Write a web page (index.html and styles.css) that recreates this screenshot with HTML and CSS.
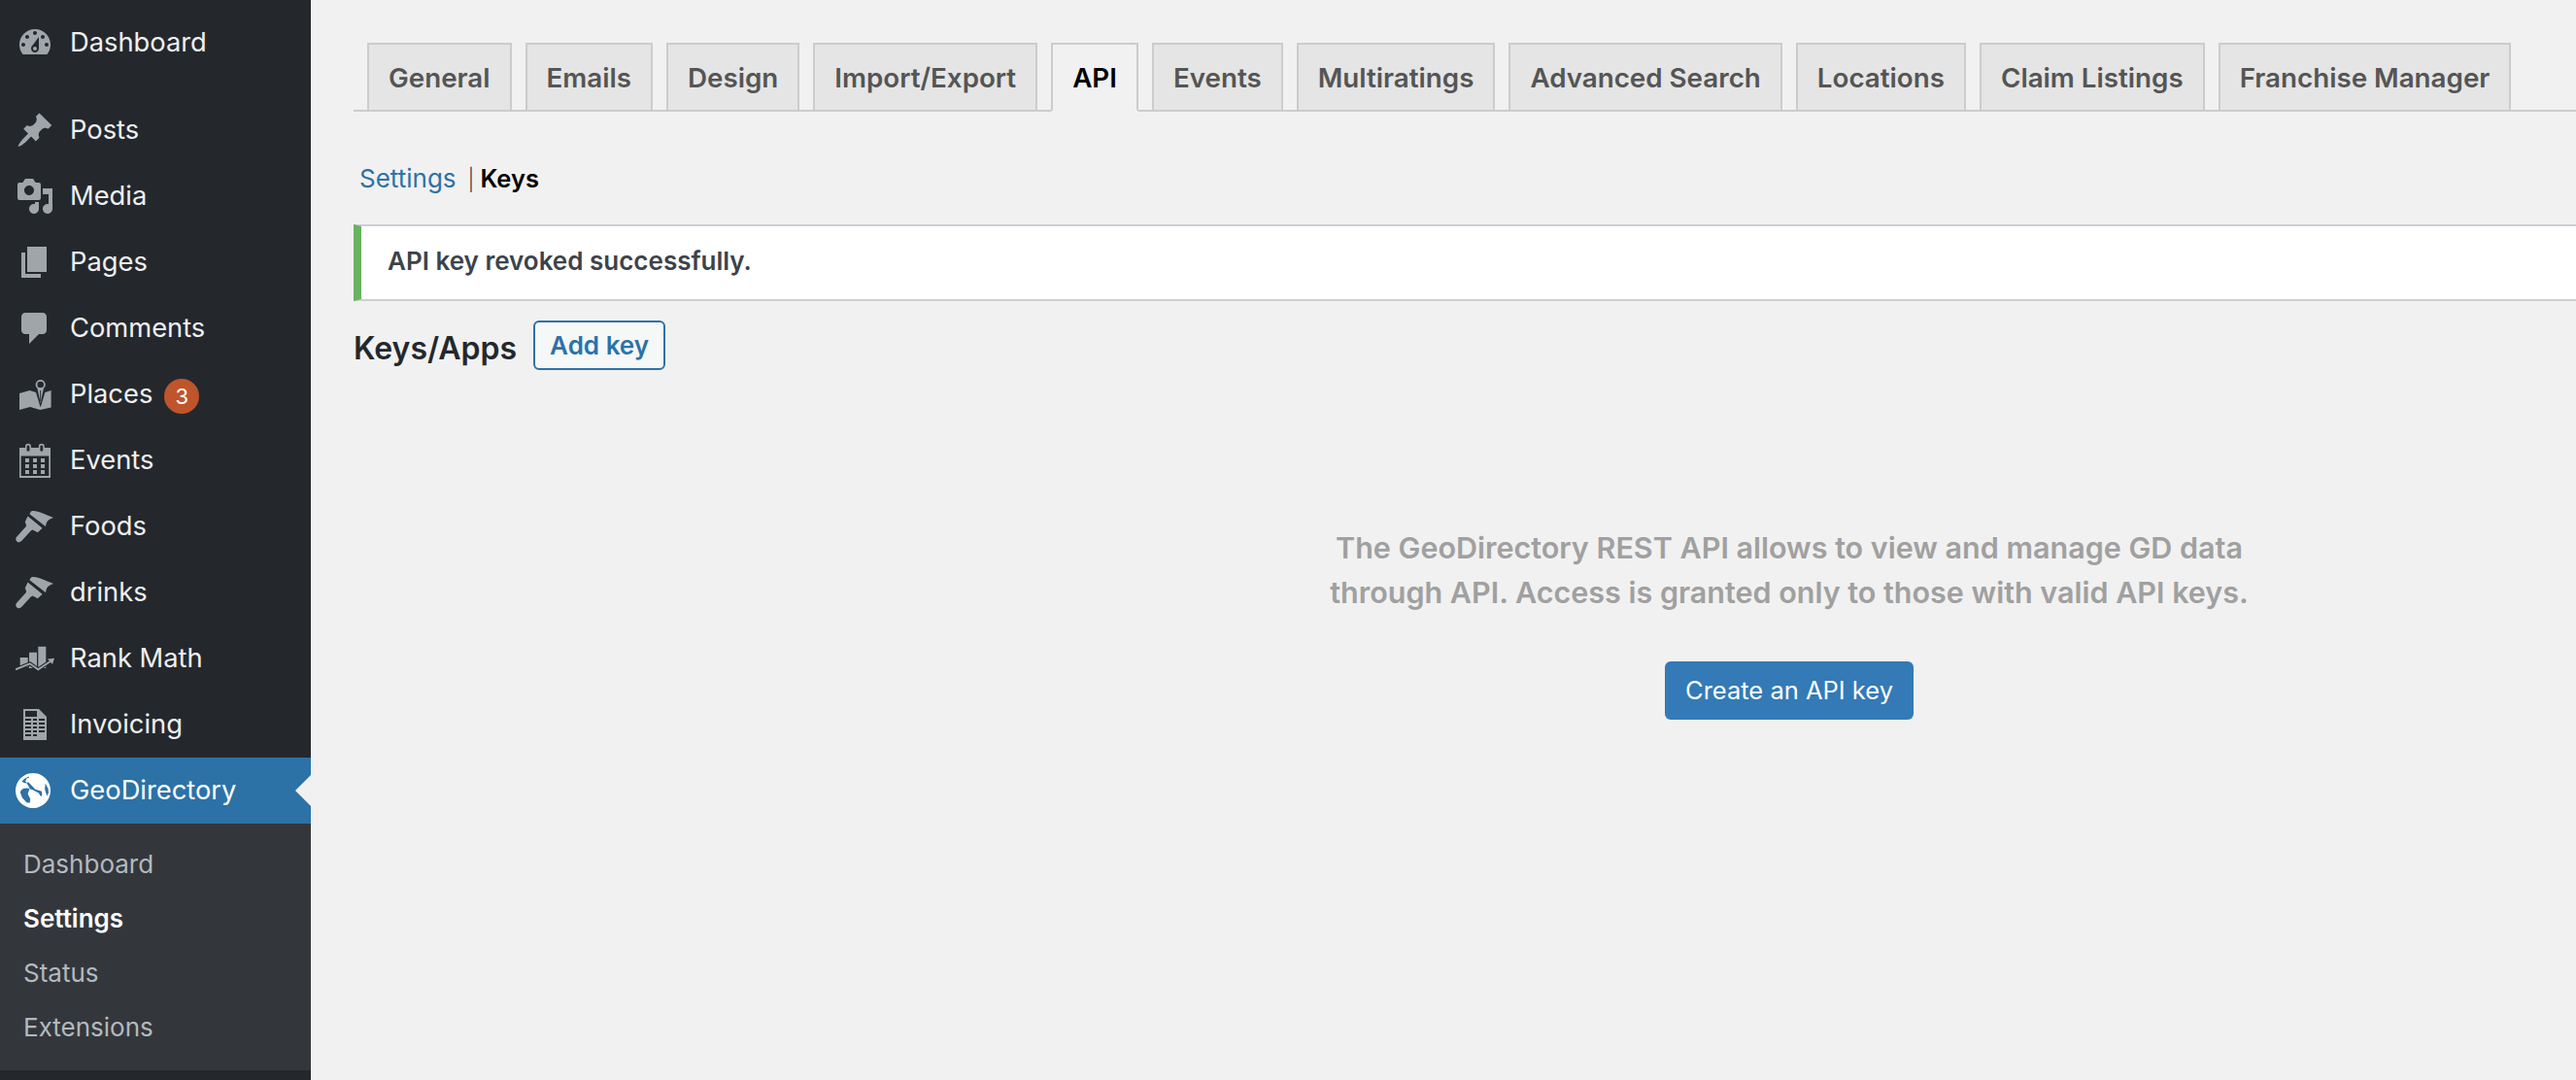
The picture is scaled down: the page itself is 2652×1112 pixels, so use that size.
FILE: index.html
```html
<!DOCTYPE html>
<html lang="en">
<head>
    <meta charset="UTF-8">
    <title>API Keys</title>
    <link rel="stylesheet" href="styles.css">
</head>
<body>
    <div class="sidebar">
        <ul class="menu first">
            <li><svg viewBox="0 0 20 20"><path fill-rule="evenodd" d="M3.76 16h12.48c1.1-1.37 1.76-3.11 1.76-5 0-4.42-3.58-8-8-8s-8 3.58-8 8c0 1.89.66 3.63 1.76 5zM10 4c.55 0 1 .45 1 1s-.45 1-1 1-1-.45-1-1 .45-1 1-1zM6 6c.55 0 1 .45 1 1s-.45 1-1 1-1-.45-1-1 .45-1 1-1zm8 0c.55 0 1 .45 1 1s-.45 1-1 1-1-.45-1-1 .45-1 1-1zm-5.37 5.55L12 7v6c0 1.1-.9 2-2 2s-2-.9-2-2c0-.57.24-1.08.63-1.45zM4 10c.55 0 1 .45 1 1s-.45 1-1 1-1-.45-1-1 .45-1 1-1zm12 0c.55 0 1 .45 1 1s-.45 1-1 1-1-.45-1-1 .45-1 1-1zm-5 3c0-.55-.45-1-1-1s-1 .45-1 1 .45 1 1 1 1-.45 1-1z"/></svg>Dashboard</li>
        </ul>
        <ul class="menu">
            <li><svg viewBox="0 0 20 20"><path d="M10.44 3.02l1.82-1.82 6.36 6.35-1.83 1.82c-1.05-.68-2.48-.57-3.41.36l-.75.75c-.92.93-1.04 2.35-.35 3.41l-1.83 1.82-2.41-2.41-2.8 2.79c-.42.42-3.38 2.71-3.8 2.29s1.86-3.39 2.28-3.81l2.79-2.79L4.1 9.36l1.83-1.82c1.05.69 2.48.57 3.4-.36l.75-.75c.93-.92 1.05-2.35.36-3.41z"/></svg>Posts</li>
            <li><svg viewBox="0 0 20 20"><path fill-rule="evenodd" d="M13 11V4c0-.55-.45-1-1-1h-1.67L9 1H5L3.67 3H2c-.55 0-1 .45-1 1v7c0 .55.45 1 1 1h10c.55 0 1-.45 1-1zM7 4.5c1.38 0 2.5 1.12 2.5 2.5S8.38 9.5 7 9.5 4.5 8.38 4.5 7 5.62 4.5 7 4.5zM14 6h5v10.5c0 1.38-1.12 2.5-2.5 2.5S14 17.88 14 16.5s1.12-2.5 2.5-2.5c.17 0 .34.02.5.05V9h-3V6zm-4 8.05V13h2v3.5c0 1.38-1.12 2.5-2.5 2.5S7 17.88 7 16.5 8.12 14 9.5 14c.17 0 .34.02.5.05z"/></svg>Media</li>
            <li><svg viewBox="0 0 20 20"><path d="M6 15V2h10v13H6zm-1 1h8v2H3V5h2v11z"/></svg>Pages</li>
            <li><svg viewBox="0 0 20 20"><path d="M5 2h9c1.1 0 2 .9 2 2v7c0 1.1-.9 2-2 2h-2l-5 5v-5H5c-1.1 0-2-.9-2-2V4c0-1.1.9-2 2-2z"/></svg>Comments</li>
            <li><svg viewBox="0 0 20 20"><path d="M2 9.500 7.300 8l3.200 1h4.700L18.300 8v8.800l-5.600 1.200-5.200-1.500L2 18z"/><path class="cut" d="M9.900 7h5.900l-2.950 9.800z"/><circle class="ring" cx="12.850" cy="5" r="2.100"/><path d="M11.200 6.800h3.300l-1.650 7.800z"/><path class="cut" d="M12.600 8h.5v5.500h-.5z"/></svg>Places<span class="count">3</span></li>
            <li><svg viewBox="0 0 20 20"><path fill-rule="evenodd" d="M2 3.500h3V2.900a1.500 1.500 0 0 1 3 0v.6h3.900V2.900a1.500 1.500 0 0 1 3 0v.6H18V19H2zM5.800 2.900v2.300h1.400V2.900a.7.7 0 0 0-1.400 0zM12.700 2.900v2.300h1.400V2.900a.7.7 0 0 0-1.400 0zM2.850 7.700V18h14.300V7.700zM5 9h2v2H5zM9 9h2v2H9zM13 9h2v2h-2zM5 12h2v2H5zM9 12h2v2H9zM13 12h2v2h-2zM5 15h2v2H5zM9 15h2v2H9zM13 15h2v2h-2z"/></svg>Events</li>
            <li><svg viewBox="0 0 20 20"><path d="M8 2.200c3-.8 7 1.800 11.500 3.300-1.800.5-3.200 1.500-3.600 2.700-.2.700-.2 1.200-.5 1.800L7.200 3.600zM6.300 4.800l7.500 6.100-2.400 2.200-2.600-1.400-.9.5-4.700 5.200c-.7.8-1.700 1-2.500.3-.7-.7-.8-1.500-.1-2.300l4.500-5c.3-.4.5-.6.4-1.200l-.6-1.500z"/></svg>Foods</li>
            <li><svg viewBox="0 0 20 20"><path d="M8 2.200c3-.8 7 1.800 11.500 3.300-1.800.5-3.200 1.500-3.600 2.700-.2.700-.2 1.200-.5 1.800L7.200 3.600zM6.300 4.800l7.500 6.100-2.400 2.200-2.600-1.400-.9.5-4.700 5.200c-.7.8-1.700 1-2.500.3-.7-.7-.8-1.500-.1-2.300l4.500-5c.3-.4.5-.6.4-1.200l-.6-1.500z"/></svg>drinks</li>
            <li><svg viewBox="0 0 20 20"><path d="M2.350 9.500h4v5h-4zM7 6.850h4V15H7zM11.650 3.850h4V15h-4z"/><path class="halo" d="M0 15.650l7.350-3 4.300 3 7-4.650"/><path class="line" d="M0 15.650l7.350-3 4.300 3 7-4.650"/><path d="M16.500 10.300l3.500-.45-1 3.150z"/></svg>Rank Math</li>
            <li><svg viewBox="0 0 20 20"><path fill-rule="evenodd" d="M4 2h8l4 4v12H4zM5 3v3h6V3zM5 7v1h3V7zM9 7v1h2V7zM12 7v1h3V7zM5 9v1h3V9zM9 9v1h2V9zM12 9v1h3V9zM5 11v1h3v-1zM9 11v1h2v-1zM12 11v1h3v-1zM5 13v1h3v-1zM9 13v1h2v-1zM12 13v1h3v-1zM5 15v1h3v-1zM9 15v1h2v-1z"/></svg>Invoicing</li>
            <li class="current"><svg viewBox="0 0 20 20"><path fill-rule="evenodd" d="M9 1a9 9 0 1 0 .01 0zM6.800 2.800C5.400 3.300 4.200 4.200 3.200 5.400l1.800.8 1.400-.6.8.6 3 3.200 3.300 1 .2 1.800-.6.9-1.200-1.900-3.100-1.600-2.800-.9-1.800.2-1.300.8-.5 1.200 1 2.700 2.400 2.700 1.600-.1.200-2-1.300-2.400 1-3.100-2.200-3.600.6-1.400 1.400-.5zM15.300 6.300l1.500 2.700.2 2.300-.9 1.500-1-3.400z"/></svg>GeoDirectory</li>
        </ul>
        <ul class="submenu">
            <li>Dashboard</li>
            <li class="current">Settings</li>
            <li>Status</li>
            <li>Extensions</li>
        </ul>
    </div>

    <div class="main">
        <div class="tabs">
            <a class="tab">General</a>
            <a class="tab">Emails</a>
            <a class="tab">Design</a>
            <a class="tab">Import/Export</a>
            <a class="tab active">API</a>
            <a class="tab">Events</a>
            <a class="tab">Multiratings</a>
            <a class="tab">Advanced Search</a>
            <a class="tab">Locations</a>
            <a class="tab">Claim Listings</a>
            <a class="tab">Franchise Manager</a>
        </div>
        <div class="subnav"><a>Settings</a><span class="sep">|</span><strong>Keys</strong></div>
        <div class="notice">API key revoked successfully.</div>
        <div class="title-row">
            <h2>Keys/Apps</h2>
            <a class="add-btn">Add key</a>
        </div>
        <div class="blank">
            <p>The GeoDirectory REST API allows to view and manage GD data through API. Access is granted only to those with valid API keys.</p>
            <a class="create-btn">Create an API key</a>
        </div>
    </div>
</body>
</html>
```

FILE: styles.css
```css
html, body {
    height: 100%;
}
body {
    margin: 0;
    display: flex;
    overflow: hidden;
    background: #f1f1f1;
    font-family: Inter, "Liberation Sans", sans-serif;
    font-size: 26px;
    color: #3c434a;
}
.sidebar {
    width: 320px;
    flex: none;
    background: #24282d;
    padding-top: 10px;
    box-sizing: border-box;
}
.menu, .submenu {
    list-style: none;
    margin: 0;
    padding: 0;
}
.menu.first {
    margin-bottom: 22px;
}
.menu li {
    position: relative;
    display: flex;
    align-items: center;
    height: 66px;
    padding: 0 0 2px 16px;
    font-size: 27.3px;
    color: #f0f0f1;
}
.menu svg {
    width: 40px;
    height: 40px;
    margin: 2px 16px 0 0;
    flex: none;
    fill: #a0a5aa;
}
.menu svg .cut {
    fill: #24282d;
}
.menu svg .ring {
    fill: none;
    stroke: #a0a5aa;
    stroke-width: 0.9;
}
.menu svg .halo {
    fill: none;
    stroke: #24282d;
    stroke-width: 2;
}
.menu svg .line {
    fill: none;
    stroke: #a0a5aa;
    stroke-width: 0.9;
}
.menu li.current {
    background: #2c72a6;
    color: #fff;
}
.menu li.current svg {
    fill: #fff;
}
.menu li.current::after {
    content: "";
    position: absolute;
    right: 0;
    top: 18px;
    border: 16px solid transparent;
    border-right-color: #f1f1f1;
    border-left: 0;
}
.count {
    width: 36px;
    height: 36px;
    margin: 6px 0 0 12px;
    border-radius: 50%;
    background: #c0542c;
    color: #fff;
    font-size: 22px;
    line-height: 36px;
    text-align: center;
}
.submenu {
    background: #33373c;
    padding: 14px 0 16px;
}
.submenu li {
    height: 56px;
    line-height: 56px;
    padding-left: 24px;
    color: #b4b9be;
}
.submenu li.current {
    color: #fff;
    font-weight: 600;
}
.main {
    flex: 1;
    min-width: 0;
    padding: 44px 0 0 44px;
}
.tabs {
    display: flex;
    gap: 14px;
    padding-left: 14px;
    height: 71px;
    box-sizing: border-box;
    border-bottom: 2px solid #ccc;
}
.tab {
    height: 71px;
    box-sizing: border-box;
    padding: 0 20px;
    line-height: 69px;
    border: 2px solid #ccc;
    background: #e5e5e5;
    color: #555;
    font-size: 27.75px;
    font-weight: 600;
    white-space: nowrap;
}
.tab.active {
    background: #f1f1f1;
    border-bottom-color: #f1f1f1;
    color: #000;
}
.subnav {
    margin-top: 52px;
    padding-left: 6px;
    line-height: 34px;
}
.subnav a {
    color: #2c72a6;
}
.sep {
    margin: 0 6px 0 12px;
    font-size: 22px;
    font-weight: 300;
    color: #3c434a;
}
.subnav strong {
    color: #000;
    font-weight: 600;
    font-size: 25.5px;
}
.notice {
    margin-top: 29px;
    height: 79px;
    box-sizing: border-box;
    line-height: 71px;
    padding-left: 27px;
    background: #fff;
    border: 2px solid #ccd0d4;
    border-left: 8px solid #68b35f;
    border-right: 0;
    font-weight: 600;
}
.title-row {
    display: flex;
    align-items: center;
    margin-top: 20px;
}
.title-row h2 {
    margin: 6px 17px 0 0;
    font-size: 32px;
    font-weight: 600;
    color: #23282d;
}
.add-btn {
    height: 51px;
    box-sizing: border-box;
    padding: 0 15px;
    line-height: 47px;
    border: 2px solid #2c72a6;
    border-radius: 6px;
    background: #f6f7f7;
    color: #2c72a6;
    font-weight: 600;
}
.blank {
    width: 980px;
    margin: 160px 0 0 988px;
    text-align: center;
}
.blank p {
    margin: 0 0 48px;
    font-size: 30.5px;
    line-height: 46px;
    font-weight: 600;
    color: #a0a0a0;
}
.create-btn {
    display: inline-block;
    height: 60px;
    line-height: 60px;
    padding: 0 21px;
    border-radius: 6px;
    background: #337ab7;
    color: #fff;
    font-size: 25.5px;
}
```
